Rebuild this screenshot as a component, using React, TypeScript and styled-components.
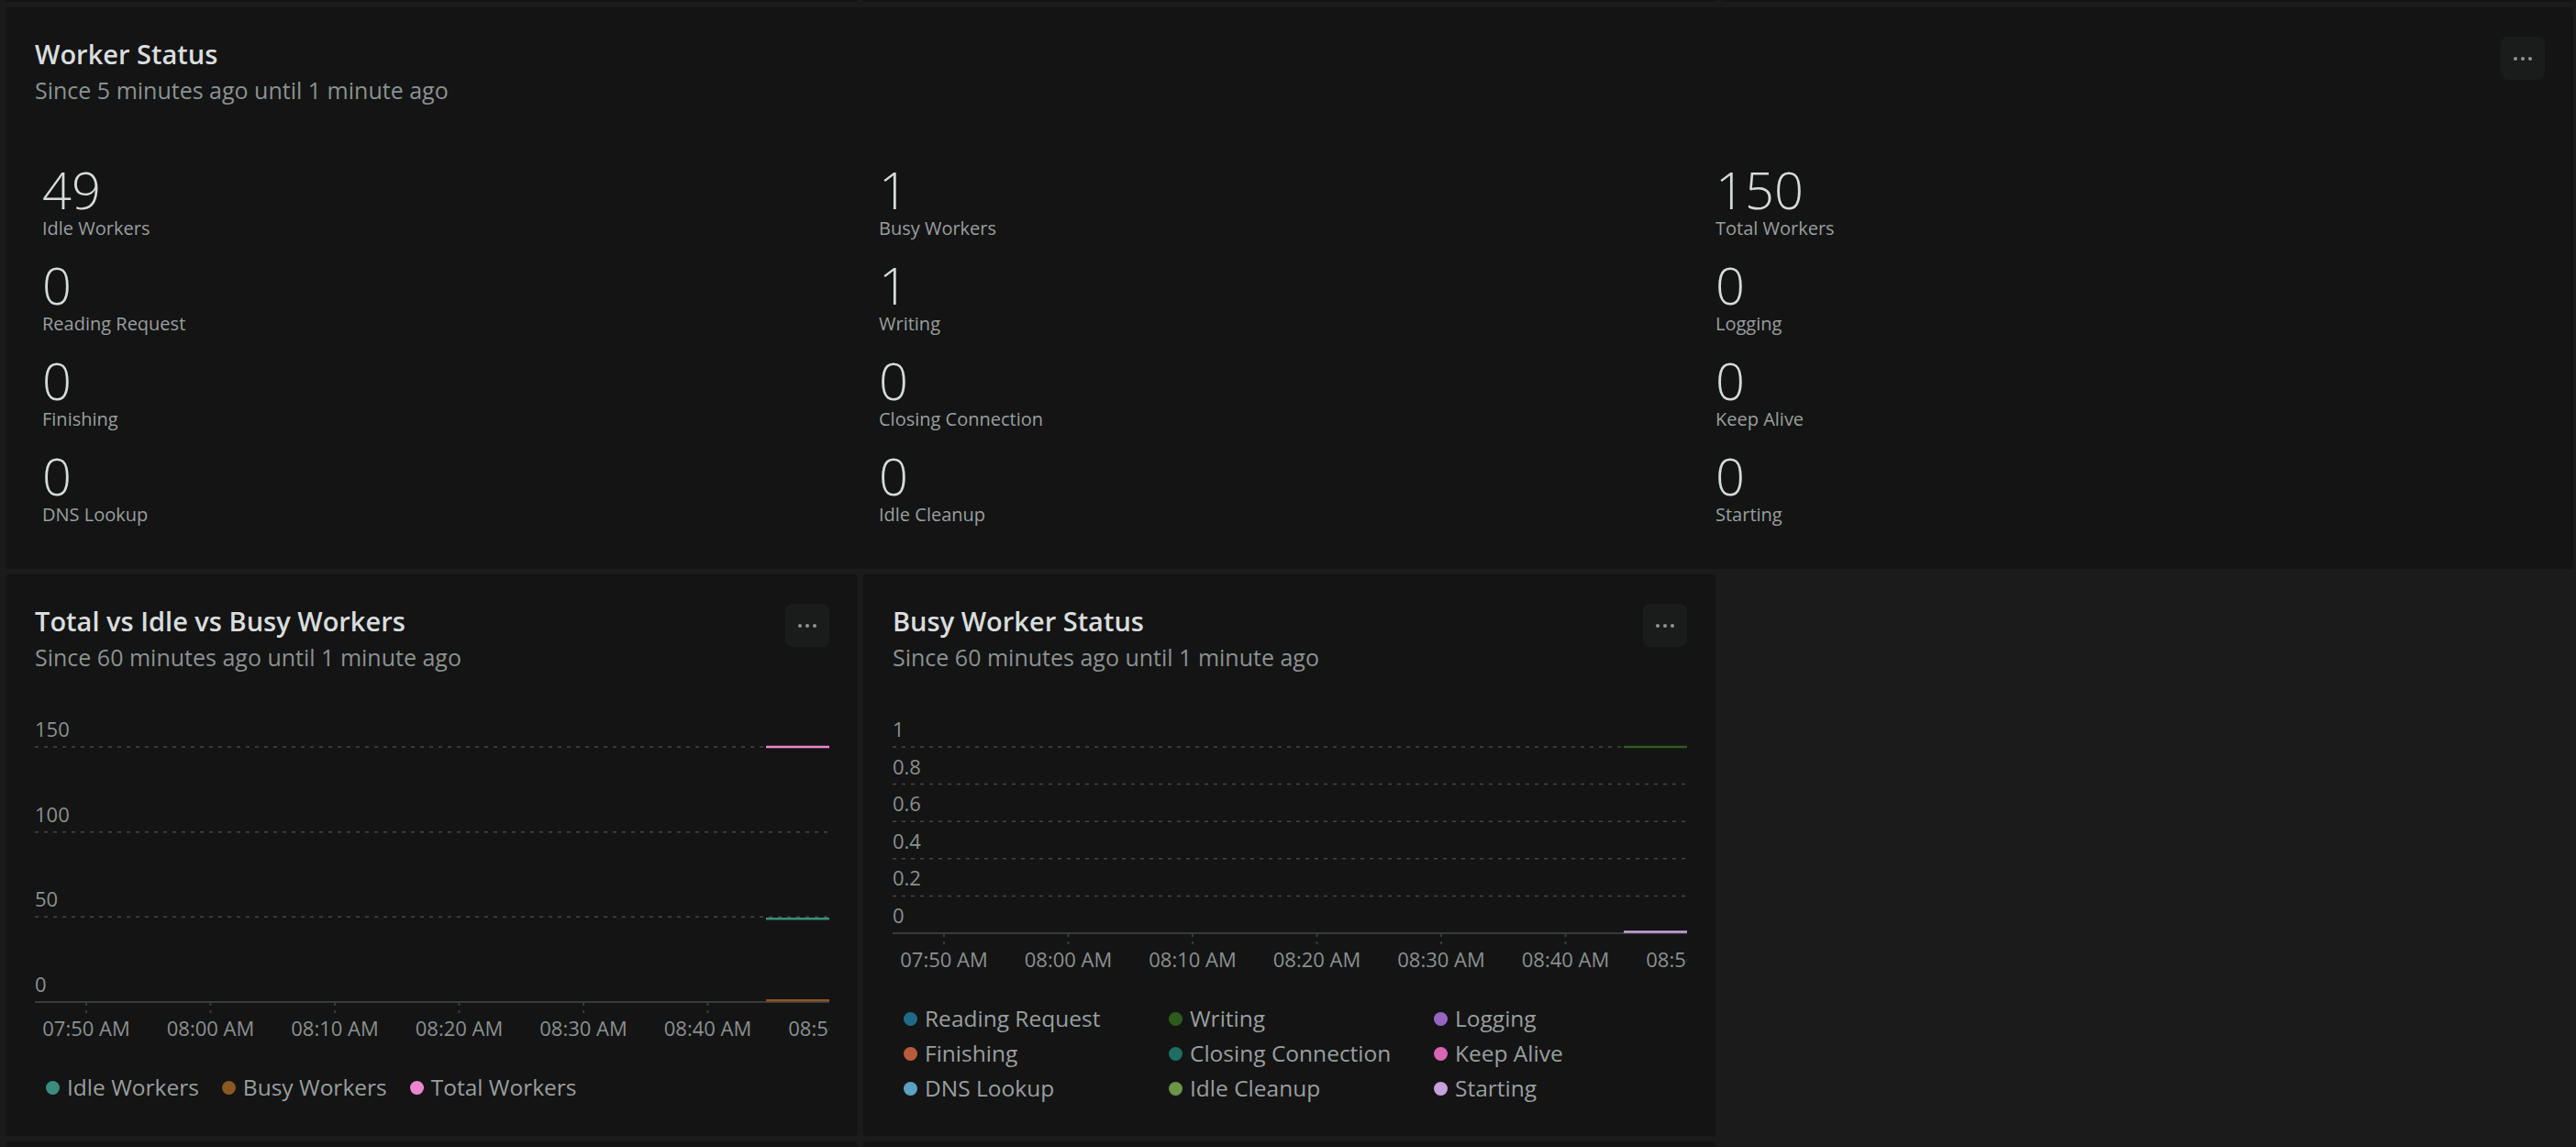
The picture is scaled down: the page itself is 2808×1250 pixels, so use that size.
import React from "react";
import styled, { createGlobalStyle } from "styled-components";

const GlobalStyle = createGlobalStyle`
  html, body {
    margin: 0;
    padding: 0;
    background: #1b1b1b;
    overflow: hidden;
  }
  body {
    font-family: "Open Sans", "Noto Sans", sans-serif;
  }
`;

const Dashboard = styled.main`
  display: grid;
  grid-template-columns: repeat(3, 1fr);
  grid-template-rows: 2px 612px 612px 40px;
  gap: 6px;
  padding: 0 3px 0 6px;
  height: 1250px;
  box-sizing: border-box;
  overflow: hidden;
`;

const Stub = styled.div`
  background: #141414;
  border-radius: 4px;
`;

const Panel = styled.section<{ $span?: number }>`
  grid-column: span ${(p) => p.$span ?? 1};
  background: #141414;
  border-radius: 4px;
  padding: 31px 31px 0 32px;
  display: flex;
  flex-direction: column;
  min-width: 0;
  overflow: hidden;
`;

const PanelHeader = styled.header`
  display: flex;
  justify-content: space-between;
  align-items: flex-start;
`;

const Title = styled.h2`
  margin: 0;
  font-size: 29px;
  font-weight: 600;
  line-height: 39px;
  color: #d9dddd;
`;

const Subtitle = styled.p`
  margin: 2px 0 0;
  font-size: 25px;
  line-height: 36px;
  color: #8b9191;
`;

const MenuButton = styled.button`
  width: 48px;
  height: 47px;
  margin-top: 1px;
  padding: 0;
  border: 0;
  border-radius: 8px;
  background: #1a1c1c;
  display: flex;
  align-items: center;
  justify-content: center;
  gap: 4px;
`;

const MenuDot = styled.span`
  width: 4px;
  height: 4px;
  border-radius: 50%;
  background: #8f9595;
`;

const StatsGrid = styled.div`
  display: grid;
  grid-template-columns: repeat(3, 1fr);
  row-gap: 19px;
  margin-top: 62px;
`;

const StatCell = styled.div`
  padding-left: 8px;
`;

const StatValue = styled.div`
  font-size: 56px;
  font-weight: 300;
  line-height: 56px;
  color: #d6dada;
`;

const StatLabel = styled.div`
  margin-top: 1px;
  font-size: 20px;
  line-height: 28px;
  color: #999f9f;
`;

const ChartArea = styled.div`
  margin-top: 36px;
`;

const ChartSvg = styled.svg`
  display: block;
  overflow: hidden;
  font-family: "Open Sans", "Noto Sans", sans-serif;
`;

const AxisText = styled.text`
  font-size: 22px;
  fill: #8a9090;
`;

const Legend = styled.ul<{ $columns?: number }>`
  margin: 27px 0 0;
  padding: 0 0 0 12px;
  list-style: none;
  display: ${(p) => (p.$columns ? "grid" : "flex")};
  grid-template-columns: ${(p) => (p.$columns ? `repeat(${p.$columns}, 289px)` : "none")};
  column-gap: ${(p) => (p.$columns ? "0" : "25px")};
`;

const LegendItem = styled.li`
  display: flex;
  align-items: center;
  gap: 8px;
  font-size: 24.5px;
  line-height: 38px;
  color: #999f9f;
  white-space: nowrap;
`;

const Swatch = styled.span<{ $color: string }>`
  width: 15px;
  height: 15px;
  border-radius: 50%;
  background: ${(p) => p.$color};
  flex: none;
`;

type Series = { name: string; color: string; value?: number };

const WIDTH = 866;
const PLOT_TOP = 44;
const TICK_START = 56;
const TICK_STEP = 135.5;
const DATA_START = 797;
const TIMES = ["07:50 AM", "08:00 AM", "08:10 AM", "08:20 AM", "08:30 AM", "08:40 AM", "08:50 AM"];

type ChartProps = {
  ticks: number[];
  max: number;
  plotHeight: number;
  series: Series[];
};

const LineChart: React.FC<ChartProps> = ({ ticks, max, plotHeight, series }) => {
  const axisY = PLOT_TOP + plotHeight;
  const y = (v: number) => axisY - (v / max) * plotHeight;
  const height = axisY + 47;
  return (
    <ChartSvg width={WIDTH} height={height} viewBox={`0 0 ${WIDTH} ${height}`}>
      {ticks.map((t) => (
        <g key={t}>
          {t !== 0 && (
            <line x1={0} x2={WIDTH} y1={y(t)} y2={y(t)} stroke="#434545" strokeWidth={1.5} strokeDasharray="4 6" />
          )}
          <AxisText x={0} y={y(t) - 11}>
            {t}
          </AxisText>
        </g>
      ))}
      <line x1={0} x2={WIDTH} y1={axisY} y2={axisY} stroke="#383b3b" strokeWidth={2} />
      {TIMES.map((label, i) => {
        const x = TICK_START + i * TICK_STEP;
        return (
          <g key={label}>
            {x < WIDTH && (
              <line x1={x} x2={x} y1={axisY + 1} y2={axisY + 12} stroke="#383b3b" strokeWidth={2} strokeDasharray="3 5" />
            )}
            <AxisText x={x} y={axisY + 37} textAnchor="middle">
              {label}
            </AxisText>
          </g>
        );
      })}
      {series
        .filter((s) => s.value !== undefined)
        .map((s) => {
          const v = s.value as number;
          const ly = v === 0 ? axisY - 1.5 : y(v);
          return <line key={s.name} x1={DATA_START} x2={WIDTH} y1={ly} y2={ly} stroke={s.color} strokeWidth={2.5} />;
        })}
    </ChartSvg>
  );
};

const Header: React.FC<{ title: string; subtitle: string }> = ({ title, subtitle }) => (
  <PanelHeader>
    <div>
      <Title>{title}</Title>
      <Subtitle>{subtitle}</Subtitle>
    </div>
    <MenuButton aria-label="More">
      <MenuDot />
      <MenuDot />
      <MenuDot />
    </MenuButton>
  </PanelHeader>
);

const stats: [string, number][] = [
  ["Idle Workers", 49],
  ["Busy Workers", 1],
  ["Total Workers", 150],
  ["Reading Request", 0],
  ["Writing", 1],
  ["Logging", 0],
  ["Finishing", 0],
  ["Closing Connection", 0],
  ["Keep Alive", 0],
  ["DNS Lookup", 0],
  ["Idle Cleanup", 0],
  ["Starting", 0],
];

const workerSeries: Series[] = [
  { name: "Idle Workers", color: "#3a8d7b", value: 49 },
  { name: "Busy Workers", color: "#8a5822", value: 1 },
  { name: "Total Workers", color: "#ec86d0", value: 150 },
];

const busySeries: Series[] = [
  { name: "Reading Request", color: "#1f6b87" },
  { name: "Writing", color: "#2d5b1d", value: 1 },
  { name: "Logging", color: "#9866c2" },
  { name: "Finishing", color: "#b95c3b" },
  { name: "Closing Connection", color: "#1f6e61" },
  { name: "Keep Alive", color: "#d965b6" },
  { name: "DNS Lookup", color: "#5ba2c2" },
  { name: "Idle Cleanup", color: "#6b9548" },
  { name: "Starting", color: "#c6a2dd", value: 0 },
];

const App: React.FC = () => {
  return (
    <>
      <GlobalStyle />
      <Dashboard>
        <Stub />
        <Stub />
        <Stub />

        <Panel $span={3}>
          <Header title="Worker Status" subtitle="Since 5 minutes ago until 1 minute ago" />
          <StatsGrid>
            {stats.map(([label, value]) => (
              <StatCell key={label}>
                <StatValue>{value}</StatValue>
                <StatLabel>{label}</StatLabel>
              </StatCell>
            ))}
          </StatsGrid>
        </Panel>

        <Panel>
          <Header title="Total vs Idle vs Busy Workers" subtitle="Since 60 minutes ago until 1 minute ago" />
          <ChartArea>
            <LineChart ticks={[150, 100, 50, 0]} max={150} plotHeight={278} series={workerSeries} />
          </ChartArea>
          <Legend>
            {workerSeries.map((s) => (
              <LegendItem key={s.name}>
                <Swatch $color={s.color} />
                {s.name}
              </LegendItem>
            ))}
          </Legend>
        </Panel>

        <Panel>
          <Header title="Busy Worker Status" subtitle="Since 60 minutes ago until 1 minute ago" />
          <ChartArea>
            <LineChart ticks={[1, 0.8, 0.6, 0.4, 0.2, 0]} max={1} plotHeight={203} series={busySeries} />
          </ChartArea>
          <Legend $columns={3}>
            {busySeries.map((s) => (
              <LegendItem key={s.name}>
                <Swatch $color={s.color} />
                {s.name}
              </LegendItem>
            ))}
          </Legend>
        </Panel>
        <div />

        <Stub />
        <Stub />
      </Dashboard>
    </>
  );
};

export default App;
